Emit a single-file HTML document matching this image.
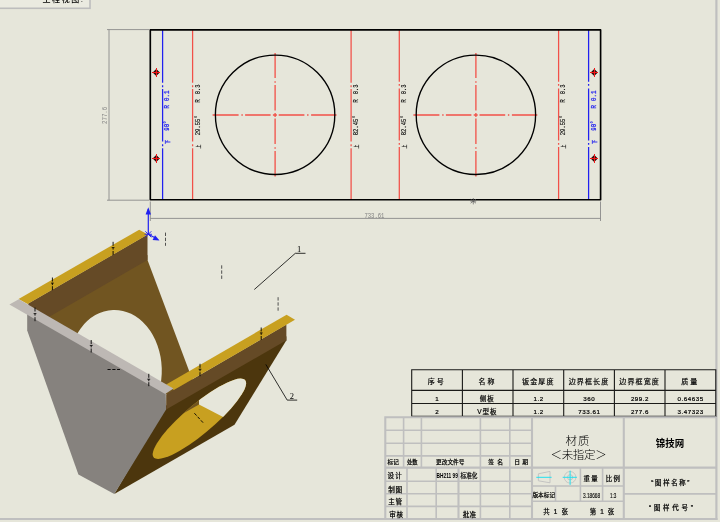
<!DOCTYPE html>
<html lang="zh"><head><meta charset="utf-8"><title>工程图</title>
<style>
html,body{margin:0;padding:0;background:#E6E6DA;overflow:hidden}
svg{display:block;will-change:transform;opacity:0.999}
text{font-family:"Liberation Sans","Noto Sans CJK SC",sans-serif}
.mono{font-family:"Liberation Mono","Noto Sans CJK SC",monospace}
.t{fill:#000}
</style></head><body>
<svg width="720" height="522" viewBox="0 0 720 522">
<rect x="0" y="0" width="720" height="522" fill="#E6E6DA"/>
<g stroke="#BFBFBF" stroke-width="2.2" fill="none">
<line x1="0" y1="519" x2="717.5" y2="519"/>
<line x1="716.4" y1="0" x2="716.4" y2="520"/>
</g>
<g>
<rect x="-2" y="-2" width="92" height="10.3" fill="#EAEAE0" stroke="#BDBDBD" stroke-width="1.6"/>
<svg x="0" y="0" width="89" height="4" overflow="hidden"><text x="42.5" y="2.2" font-size="8" fill="#000" font-weight="500" textLength="40.5">工程视图:</text></svg>
</g>
<g id="flat">
<path d="M192.6 29.9V82.7M192.6 85.2V87.2M192.6 89.1V141.6M192.6 144.2V146.2M192.6 148.3V199.8" stroke="#F25048" stroke-width="1.25" fill="none"/>
<path d="M351.1 29.9V82.7M351.1 85.2V87.2M351.1 89.1V141.6M351.1 144.2V146.2M351.1 148.3V199.8" stroke="#F25048" stroke-width="1.25" fill="none"/>
<path d="M399.3 29.9V81.8M399.3 83.9V85.8M399.3 88.5V140.6M399.3 143.0V144.8M399.3 147.0V199.8" stroke="#F25048" stroke-width="1.25" fill="none"/>
<path d="M558.6 29.9V81.8M558.6 83.9V85.8M558.6 88.5V140.6M558.6 143.0V144.8M558.6 147.0V199.8" stroke="#F25048" stroke-width="1.25" fill="none"/>
<path d="M162.6 29.9V82.7M162.6 85.2V87.2M162.6 89.1V141.6M162.6 144.2V146.2M162.6 148.3V199.8" stroke="#2020F0" stroke-width="1.25" fill="none"/>
<path d="M588.6 29.9V81.8M588.6 83.9V85.8M588.6 88.5V140.6M588.6 143.0V144.8M588.6 147.0V199.8" stroke="#2020F0" stroke-width="1.25" fill="none"/>
<path d="M212.6 115.0H238.6M241.4 115.0H242.8M245.1 115.0H270.6M272.9 115.0H276.9M278.7 115.0H304.4M307.1 115.0H308.5M311.1 115.0H336.5M275.1 53.0V78.0M275.1 81.3V82.7M275.1 85.0V110.6M275.1 113.0V117.0M275.1 118.6V144.0M275.1 147.3V148.7M275.1 151.0V176.4" stroke="#F25048" stroke-width="1.3" fill="none"/>
<circle cx="275.1" cy="114.8" r="59.7" fill="none" stroke="#000" stroke-width="1.35"/>
<path d="M413.4 115.0H439.4M442.2 115.0H443.6M445.9 115.0H471.4M473.7 115.0H477.7M479.5 115.0H505.2M507.9 115.0H509.3M511.9 115.0H537.3M475.9 53.0V78.0M475.9 81.3V82.7M475.9 85.0V110.6M475.9 113.0V117.0M475.9 118.6V144.0M475.9 147.3V148.7M475.9 151.0V176.4" stroke="#F25048" stroke-width="1.3" fill="none"/>
<circle cx="475.9" cy="114.8" r="59.7" fill="none" stroke="#000" stroke-width="1.35"/>
<rect x="150.3" y="29.9" width="450.3" height="169.9" fill="none" stroke="#000" stroke-width="1.65" stroke-linejoin="round"/>
<g transform="translate(156.5 72.5)"><path d="M-0.3 -2.8L2.5 0L-0.3 2.8L-3.1 0Z" fill="#5A1010" stroke="#200808" stroke-width="1.1"/><path d="M-4.5 0H3.5M0 -4.5V4.5" stroke="#F01818" stroke-width="1"/></g>
<g transform="translate(156.5 158.5)"><path d="M-0.3 -2.8L2.5 0L-0.3 2.8L-3.1 0Z" fill="#5A1010" stroke="#200808" stroke-width="1.1"/><path d="M-4.5 0H3.5M0 -4.5V4.5" stroke="#F01818" stroke-width="1"/></g>
<g transform="translate(594.5 72.5)"><path d="M-0.3 -2.8L2.5 0L-0.3 2.8L-3.1 0Z" fill="#5A1010" stroke="#200808" stroke-width="1.1"/><path d="M-4.5 0H3.5M0 -4.5V4.5" stroke="#F01818" stroke-width="1"/></g>
<g transform="translate(594.5 158.5)"><path d="M-0.3 -2.8L2.5 0L-0.3 2.8L-3.1 0Z" fill="#5A1010" stroke="#200808" stroke-width="1.1"/><path d="M-4.5 0H3.5M0 -4.5V4.5" stroke="#F01818" stroke-width="1"/></g>
<text class="mono" transform="translate(169.3 143.9) rotate(-90)" font-size="5.0" fill="#2020F0" stroke="#2020F0" stroke-width="0.25" textLength="4.2" lengthAdjust="spacingAndGlyphs">下</text>
<text class="mono" transform="translate(169.3 130.7) rotate(-90)" font-size="6.3" fill="#2020F0" stroke="#2020F0" stroke-width="0.25" textLength="10.2" lengthAdjust="spacingAndGlyphs">90°</text>
<text class="mono" transform="translate(169.3 108.5) rotate(-90)" font-size="6.3" fill="#2020F0" stroke="#2020F0" stroke-width="0.25" textLength="3.5" lengthAdjust="spacingAndGlyphs">R</text>
<text class="mono" transform="translate(169.3 100.9) rotate(-90)" font-size="6.3" fill="#2020F0" stroke="#2020F0" stroke-width="0.25" textLength="10.4" lengthAdjust="spacingAndGlyphs">0.1</text>
<text class="mono" transform="translate(199.5 148.7) rotate(-90)" font-size="5.0" fill="#000" stroke="#000" stroke-width="0.12" textLength="4.2" lengthAdjust="spacingAndGlyphs">上</text>
<text class="mono" transform="translate(199.5 135.3) rotate(-90)" font-size="6.3" fill="#000" stroke="#000" stroke-width="0.12" textLength="20.1" lengthAdjust="spacingAndGlyphs">29.55°</text>
<text class="mono" transform="translate(199.5 102.8) rotate(-90)" font-size="6.3" fill="#000" stroke="#000" stroke-width="0.12" textLength="3.5" lengthAdjust="spacingAndGlyphs">R</text>
<text class="mono" transform="translate(199.5 94.2) rotate(-90)" font-size="6.3" fill="#000" stroke="#000" stroke-width="0.12" textLength="9.8" lengthAdjust="spacingAndGlyphs">0.3</text>
<text class="mono" transform="translate(357.9 148.7) rotate(-90)" font-size="5.0" fill="#000" stroke="#000" stroke-width="0.12" textLength="4.2" lengthAdjust="spacingAndGlyphs">上</text>
<text class="mono" transform="translate(357.9 135.3) rotate(-90)" font-size="6.3" fill="#000" stroke="#000" stroke-width="0.12" textLength="20.1" lengthAdjust="spacingAndGlyphs">82.45°</text>
<text class="mono" transform="translate(357.9 102.8) rotate(-90)" font-size="6.3" fill="#000" stroke="#000" stroke-width="0.12" textLength="3.5" lengthAdjust="spacingAndGlyphs">R</text>
<text class="mono" transform="translate(357.9 94.2) rotate(-90)" font-size="6.3" fill="#000" stroke="#000" stroke-width="0.12" textLength="9.8" lengthAdjust="spacingAndGlyphs">0.3</text>
<text class="mono" transform="translate(406.3 148.7) rotate(-90)" font-size="5.0" fill="#000" stroke="#000" stroke-width="0.12" textLength="4.2" lengthAdjust="spacingAndGlyphs">上</text>
<text class="mono" transform="translate(406.3 135.3) rotate(-90)" font-size="6.3" fill="#000" stroke="#000" stroke-width="0.12" textLength="20.1" lengthAdjust="spacingAndGlyphs">82.45°</text>
<text class="mono" transform="translate(406.3 102.8) rotate(-90)" font-size="6.3" fill="#000" stroke="#000" stroke-width="0.12" textLength="3.5" lengthAdjust="spacingAndGlyphs">R</text>
<text class="mono" transform="translate(406.3 94.2) rotate(-90)" font-size="6.3" fill="#000" stroke="#000" stroke-width="0.12" textLength="9.8" lengthAdjust="spacingAndGlyphs">0.3</text>
<text class="mono" transform="translate(565.3 148.7) rotate(-90)" font-size="5.0" fill="#000" stroke="#000" stroke-width="0.12" textLength="4.2" lengthAdjust="spacingAndGlyphs">上</text>
<text class="mono" transform="translate(565.3 135.3) rotate(-90)" font-size="6.3" fill="#000" stroke="#000" stroke-width="0.12" textLength="20.1" lengthAdjust="spacingAndGlyphs">29.55°</text>
<text class="mono" transform="translate(565.3 102.8) rotate(-90)" font-size="6.3" fill="#000" stroke="#000" stroke-width="0.12" textLength="3.5" lengthAdjust="spacingAndGlyphs">R</text>
<text class="mono" transform="translate(565.3 94.2) rotate(-90)" font-size="6.3" fill="#000" stroke="#000" stroke-width="0.12" textLength="9.8" lengthAdjust="spacingAndGlyphs">0.3</text>
<text class="mono" transform="translate(595.6 143.9) rotate(-90)" font-size="5.0" fill="#2020F0" stroke="#2020F0" stroke-width="0.25" textLength="4.2" lengthAdjust="spacingAndGlyphs">下</text>
<text class="mono" transform="translate(595.6 130.7) rotate(-90)" font-size="6.3" fill="#2020F0" stroke="#2020F0" stroke-width="0.25" textLength="10.2" lengthAdjust="spacingAndGlyphs">90°</text>
<text class="mono" transform="translate(595.6 108.5) rotate(-90)" font-size="6.3" fill="#2020F0" stroke="#2020F0" stroke-width="0.25" textLength="3.5" lengthAdjust="spacingAndGlyphs">R</text>
<text class="mono" transform="translate(595.6 100.9) rotate(-90)" font-size="6.3" fill="#2020F0" stroke="#2020F0" stroke-width="0.25" textLength="10.4" lengthAdjust="spacingAndGlyphs">0.1</text>
<g stroke="#8A8A8A" stroke-width="0.9" fill="none">
<path d="M107 29.6H149.3M107 200.2H149.3M109 29.6V200.2"/>
<path d="M150.3 201.5V221M600.5 201.5V221M150.3 218.4H600.5"/>
</g>
<text class="mono" transform="translate(107.4 124) rotate(-90)" font-size="7" fill="#858585" textLength="17.2" lengthAdjust="spacingAndGlyphs">277.6</text>
<text class="mono" x="364.4" y="217.7" font-size="7" fill="#808080" textLength="20" lengthAdjust="spacingAndGlyphs">733.61</text>
<path d="M473.3 198V204.4M470.6 199.2L476 203.2M476 199.2L470.6 203.2M470.4 201.2H476.2" stroke="#606060" stroke-width="0.7" fill="none"/>
</g>
<g id="model">
<polygon points="147.5,255.0 40.0,317.0 40.0,345.0 165.0,394.0 200.0,400.0 185.0,360.0 147.5,260.0" fill="#715521"/>
<circle r="1" fill="#E6E6DA" transform="matrix(-42.60 24.50 19.60 54.90 114.90 370.00)"/>
<polygon points="147.5,234.5 147.5,260.0 29.0,328.4 28.2,303.6" fill="#654A26"/>
<polygon points="139.2,229.7 147.8,234.6 27.6,304.0 18.6,299.0" fill="#C8A020"/>
<polygon points="166.2,405.5 286.4,336.3 286.4,340.3 234.5,424.8 114.3,494.0" fill="#4C360D"/>
<clipPath id="hole"><circle r="1" transform="matrix(42.41 -24.43 -19.62 31.94 199.39 418.76)"/></clipPath>
<g clip-path="url(#hole)">
<rect x="140" y="360" width="120" height="110" fill="#C8A020"/>
<polygon points="199.0,380.0 199.0,404.5 240.0,425.8 260.0,425.0 260.0,360.0" fill="#E6E6DA"/>
<polygon points="199.0,380.0 199.0,404.5 180.0,415.3 170.0,400.0" fill="#715521"/>
</g>
<polygon points="166.2,394.5 166.2,409.5 286.4,340.3 286.4,324.6" fill="#654A26"/>
<polygon points="166.2,384.5 286.6,314.7 295.0,319.8 173.8,390.0" fill="#C8A020"/>
<polygon points="27.2,311.0 27.2,330.5 78.4,474.4 114.3,494.0 166.1,409.5 165.7,391.0" fill="#86827E"/>
<polygon points="9.4,304.4 18.8,299.3 173.4,388.6 165.2,393.9" fill="#BDB8B4"/>
<path d="M52.4 277.5V281.5M52.4 282.9V285.1M52.4 286.2V290.2" stroke="#000" stroke-width="0.9" fill="none"/>
<path d="M51.0 283.1H53.8" stroke="#000" stroke-width="0.8"/>
<path d="M113.1 241.8V245.8M113.1 247.4V249.6M113.1 251.0V255.0" stroke="#000" stroke-width="0.9" fill="none"/>
<path d="M111.7 247.6H114.5" stroke="#000" stroke-width="0.8"/>
<path d="M35.0 307.5V311.5M35.0 313.4V315.6M35.0 317.2V321.2" stroke="#000" stroke-width="0.9" fill="none"/>
<path d="M33.6 313.6H36.4" stroke="#000" stroke-width="0.8"/>
<path d="M91.2 340.0V344.0M91.2 345.2V347.4M91.2 348.5V352.5" stroke="#000" stroke-width="0.9" fill="none"/>
<path d="M89.8 345.4H92.7" stroke="#000" stroke-width="0.8"/>
<path d="M148.8 373.8V377.8M148.8 379.0V381.2M148.8 382.2V386.2" stroke="#000" stroke-width="0.9" fill="none"/>
<path d="M147.3 379.2H150.2" stroke="#000" stroke-width="0.8"/>
<path d="M200.0 363.8V367.8M200.0 369.0V371.2M200.0 372.2V376.2" stroke="#000" stroke-width="0.9" fill="none"/>
<path d="M198.6 369.2H201.4" stroke="#000" stroke-width="0.8"/>
<path d="M261.2 327.5V331.5M261.2 332.8V334.9M261.2 336.0V340.0" stroke="#000" stroke-width="0.9" fill="none"/>
<path d="M259.9 332.9H262.6" stroke="#000" stroke-width="0.8"/>
<path d="M165.5 232.6V245.8" stroke="#404040" stroke-width="0.9" stroke-dasharray="3.4 1.7" fill="none"/>
<path d="M221.7 265.3V279.1" stroke="#404040" stroke-width="0.9" stroke-dasharray="3.4 1.7" fill="none"/>
<path d="M278.1 297.2V310.7" stroke="#404040" stroke-width="0.9" stroke-dasharray="3.4 1.7" fill="none"/>
<path d="M107.5 369.5H120" stroke="#000" stroke-width="0.9" stroke-dasharray="3.2 1.6"/>
<path d="M194.4 413.2L203.9 423.6" stroke="#000" stroke-width="0.9" stroke-dasharray="3.2 1.6"/>
<path d="M254.3 289.5L295.3 253.3H305.5" stroke="#000" stroke-width="0.8" fill="none"/>
<text x="299.2" y="252.4" font-size="8.5" text-anchor="middle" style="font-family:'Liberation Serif',serif" fill="#000">1</text>
<path d="M265.8 364.4L287.2 400.1H297.2" stroke="#000" stroke-width="0.8" fill="none"/>
<text x="291.8" y="399.3" font-size="8.5" text-anchor="middle" style="font-family:'Liberation Serif',serif" fill="#000">2</text>
<g stroke="#2020F0" fill="#2020F0">
<path d="M148.3 234.3V209" stroke-width="1.2" fill="none"/>
<path d="M148.3 207.2L151 214.6H145.6Z" stroke="none"/>
<path d="M148.3 234.3L156 238.3" stroke-width="1.2" fill="none"/>
<path d="M159.6 240.4L152.6 239.9L155 235.3Z" stroke="none"/>
<path d="M145.3 231.3L151.3 237.3M151.3 231.3L145.3 237.3M144.6 234.3H152" stroke-width="0.9" fill="none"/>
</g>
</g>
<g id="bom">
<path d="M411.7 369.7V416.4M462.4 369.7V416.4M513.0 369.7V416.4M563.7 369.7V416.4M614.4 369.7V416.4M665.0 369.7V416.4M715.8 369.7V416.4M411.7 369.7H715.8M411.7 390.4H715.8M411.7 403.5H715.8M411.7 416.4H715.8" stroke="#1A1A18" stroke-width="1.1" fill="none" stroke-linecap="square"/>
<text class="t" x="436.8" y="384.2" text-anchor="middle" font-size="7" letter-spacing="2.0" stroke="#000" stroke-width="0.2">序号</text>
<text class="t" x="437.3" y="401.2" text-anchor="middle" font-size="6.2" letter-spacing="0.55" stroke="#000" stroke-width="0.2">1</text>
<text class="t" x="437.3" y="414.1" text-anchor="middle" font-size="6.2" letter-spacing="0.55" stroke="#000" stroke-width="0.2">2</text>
<text class="t" x="487.5" y="384.2" text-anchor="middle" font-size="7" letter-spacing="2.0" stroke="#000" stroke-width="0.2">名称</text>
<text class="t" x="487.3" y="400.9" text-anchor="middle" font-size="6.6" letter-spacing="0.9" stroke="#000" stroke-width="0.2">侧板</text>
<text class="t" x="487.3" y="413.8" text-anchor="middle" font-size="6.6" letter-spacing="0.9" stroke="#000" stroke-width="0.2">V型板</text>
<text class="t" x="538.3" y="384.2" text-anchor="middle" font-size="7" letter-spacing="1.1" stroke="#000" stroke-width="0.2">钣金厚度</text>
<text class="t" x="538.6" y="401.2" text-anchor="middle" font-size="6.2" letter-spacing="0.55" stroke="#000" stroke-width="0.2">1.2</text>
<text class="t" x="538.6" y="414.1" text-anchor="middle" font-size="6.2" letter-spacing="0.55" stroke="#000" stroke-width="0.2">1.2</text>
<text class="t" x="589.0" y="384.2" text-anchor="middle" font-size="7" letter-spacing="1.1" stroke="#000" stroke-width="0.2">边界框长度</text>
<text class="t" x="589.3" y="401.2" text-anchor="middle" font-size="6.2" letter-spacing="0.55" stroke="#000" stroke-width="0.2">360</text>
<text class="t" x="589.3" y="414.1" text-anchor="middle" font-size="6.2" letter-spacing="0.55" stroke="#000" stroke-width="0.2">733.61</text>
<text class="t" x="639.6" y="384.2" text-anchor="middle" font-size="7" letter-spacing="1.1" stroke="#000" stroke-width="0.2">边界框宽度</text>
<text class="t" x="640.0" y="401.2" text-anchor="middle" font-size="6.2" letter-spacing="0.55" stroke="#000" stroke-width="0.2">299.2</text>
<text class="t" x="640.0" y="414.1" text-anchor="middle" font-size="6.2" letter-spacing="0.55" stroke="#000" stroke-width="0.2">277.6</text>
<text class="t" x="690.2" y="384.2" text-anchor="middle" font-size="7" letter-spacing="2.0" stroke="#000" stroke-width="0.2">质量</text>
<text class="t" x="690.7" y="401.2" text-anchor="middle" font-size="6.2" letter-spacing="0.55" stroke="#000" stroke-width="0.2">0.64635</text>
<text class="t" x="690.7" y="414.1" text-anchor="middle" font-size="6.2" letter-spacing="0.55" stroke="#000" stroke-width="0.2">3.47323</text>
</g>
<g id="title">
<path d="M385.3 430.2H532M385.3 443.2H532M385.3 455.9H532M385.3 481.3H532M385.3 493.8H532M385.3 506.4H532M403.6 417.2V467.6M421.4 417.2V467.6M480.4 417.2V518.8M509.8 417.2V518.8M407.0 467.6V518.8M436.2 467.6V518.8M532 485.95H623.8M532 501.2H623.8M580.4 467.6V501.2M602.6 467.6V501.2M555.5 485.95V501.2M623.8 493.9H716.2" stroke="#BFBFBF" stroke-width="1.6" fill="none"/>
<path d="M385.3 467.6H716.2M532 417.2V518.8M623.8 417.2V518.8M458.5 467.6V518.8M385.3 519V417.2H716.2" stroke="#BFBFBF" stroke-width="2.1" fill="none"/>
<text x="387.6" y="463.6" font-size="5.8" fill="#000" stroke="#000" stroke-width="0.22" textLength="11.2" lengthAdjust="spacingAndGlyphs">标记</text>
<text x="407.0" y="463.6" font-size="5.8" fill="#000" stroke="#000" stroke-width="0.22" textLength="10.6" lengthAdjust="spacingAndGlyphs">处数</text>
<text x="436.1" y="463.6" font-size="5.8" fill="#000" stroke="#000" stroke-width="0.22" textLength="28.3" lengthAdjust="spacingAndGlyphs">更改文件号</text>
<text x="488.2" y="463.6" font-size="5.8" fill="#000" stroke="#000" stroke-width="0.22" textLength="14.8" lengthAdjust="spacing">签名</text>
<text x="514.2" y="463.6" font-size="5.8" fill="#000" stroke="#000" stroke-width="0.22" textLength="13.8" lengthAdjust="spacing">日期</text>
<text x="387.6" y="477.8" font-size="6.6" fill="#000" stroke="#000" stroke-width="0.22" textLength="14.2" lengthAdjust="spacing">设计</text>
<text x="436.6" y="477.8" font-size="6.6" font-weight="700" fill="#000" textLength="21.2" lengthAdjust="spacingAndGlyphs">BH211 99</text>
<text x="460.5" y="477.8" font-size="6.4" fill="#000" stroke="#000" stroke-width="0.22" textLength="16.9" lengthAdjust="spacingAndGlyphs">标准化</text>
<text x="388.2" y="491.8" font-size="6.6" fill="#000" stroke="#000" stroke-width="0.22" textLength="14.0" lengthAdjust="spacing">制图</text>
<text x="388.2" y="504.4" font-size="6.6" fill="#000" stroke="#000" stroke-width="0.22" textLength="14.0" lengthAdjust="spacing">主管</text>
<text x="389.2" y="517.0" font-size="6.6" fill="#000" stroke="#000" stroke-width="0.22" textLength="13.8" lengthAdjust="spacing">审核</text>
<text x="462.8" y="517.0" font-size="6.6" fill="#000" stroke="#000" stroke-width="0.22" textLength="13.4" lengthAdjust="spacing">批准</text>
<text x="578.1" y="444.6" font-size="11.5" fill="#000" text-anchor="middle" letter-spacing="1.2" font-weight="300">材质</text>
<text x="550.4" y="459.4" font-size="11.5" fill="#000" font-weight="300" textLength="56.4" lengthAdjust="spacing">＜未指定＞</text>
<text x="670" y="446.6" font-size="10" fill="#000" text-anchor="middle" font-weight="700" textLength="28.4" lengthAdjust="spacingAndGlyphs">锦技网</text>
<text x="651.3" y="485.0" font-size="6.4" fill="#000" stroke="#000" stroke-width="0.22" textLength="38.1" lengthAdjust="spacing">“图样名称”</text>
<text x="649.0" y="510.0" font-size="6.4" fill="#000" stroke="#000" stroke-width="0.22" textLength="43.8" lengthAdjust="spacing">“图样代号”</text>
<text x="583.5" y="481.0" font-size="6.4" fill="#000" stroke="#000" stroke-width="0.22" textLength="14.1" lengthAdjust="spacing">重量</text>
<text x="605.8" y="481.0" font-size="6.4" fill="#000" stroke="#000" stroke-width="0.22" textLength="14.0" lengthAdjust="spacing">比例</text>
<text x="532.4" y="496.9" font-size="6.0" fill="#000" stroke="#000" stroke-width="0.22" textLength="22.8" lengthAdjust="spacingAndGlyphs">版本标记</text>
<text x="582.9" y="497.5" font-size="7.2" fill="#000" stroke="#000" stroke-width="0.12" textLength="17.3" lengthAdjust="spacingAndGlyphs">3.18668</text>
<text x="610" y="497.5" font-size="7.2" fill="#000" stroke="#000" stroke-width="0.12" textLength="6.4" lengthAdjust="spacingAndGlyphs">1:3</text>
<text x="543.3" y="514.4" font-size="6.4" fill="#000" stroke="#000" stroke-width="0.22" textLength="24.5" lengthAdjust="spacing">共 1 张</text>
<text x="589.8" y="514.4" font-size="6.4" fill="#000" stroke="#000" stroke-width="0.22" textLength="24.4" lengthAdjust="spacing">第 1 张</text>
<path d="M538.4 473.8L550 471.4V482.8L538.4 480.8Z" fill="none" stroke="#BFBFBF" stroke-width="0.9"/>
<circle cx="570.1" cy="477.3" r="5.8" fill="none" stroke="#BFBFBF" stroke-width="0.8"/>
<circle cx="570.1" cy="477.3" r="2.6" fill="none" stroke="#BFBFBF" stroke-width="0.9"/>
<path d="M536.3 477.3H551.6M562.7 477.3H576.9M570.1 470.6V484.9" stroke="#20E0F0" stroke-width="1" fill="none"/>
</g>
</svg>
</body></html>
